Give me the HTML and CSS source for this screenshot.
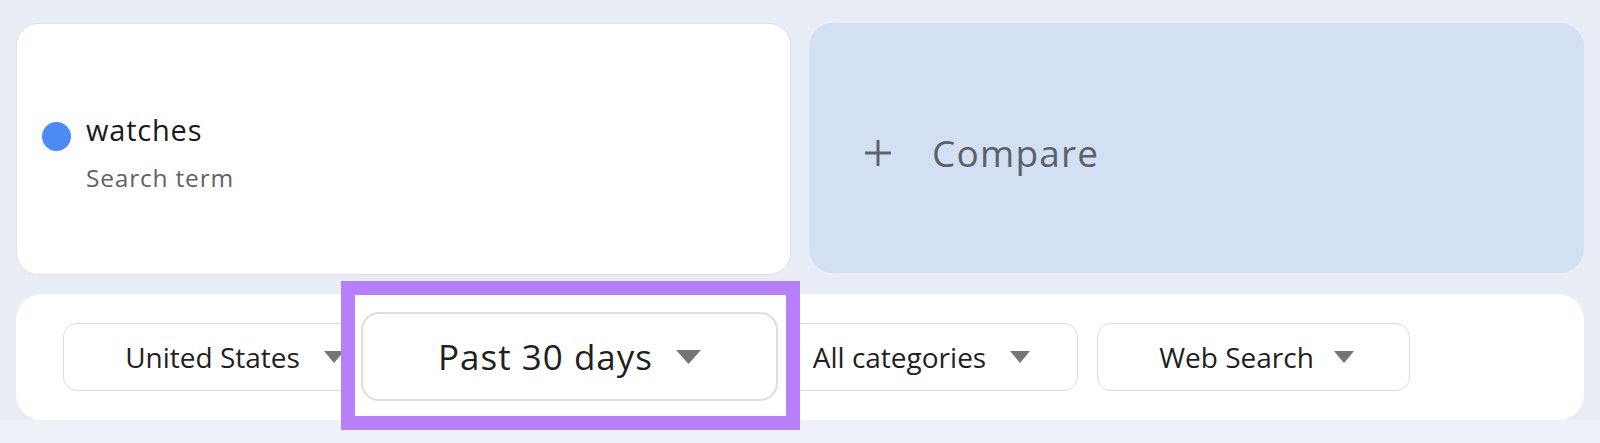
FILE: index.html
```html
<!DOCTYPE html>
<html lang="en">
<head>
    <meta charset="UTF-8">
    <title>Explore - watches</title>
    <link rel="stylesheet" href="styles.css">
</head>
<body>
    <div class="page">
        <div class="cards">
            <div class="card term-card">
                <div class="term-row">
                    <span class="dot"></span>
                    <span class="term">watches</span>
                </div>
                <div class="term-type">Search term</div>
            </div>
            <div class="card compare-card">
                <svg class="plus" width="28" height="28" viewBox="0 0 28 28">
                    <path d="M14 1v26M1 14h26" stroke="#5f6368" stroke-width="3" fill="none"/>
                </svg>
                <span class="compare">Compare</span>
            </div>
        </div>

        <div class="filters">
            <div class="pill pill-geo">
                <span>United States</span>
                <svg class="caret" width="20" height="12" viewBox="0 0 20 12"><polygon points="0,0 20,0 10,12"/></svg>
            </div>
            <div class="pill-slot">
                <!-- highlighted callout of the time range filter -->
                <div class="highlight">
                    <div class="pill pill-big">
                        <span>Past 30 days</span>
                        <svg class="caret" width="25" height="14" viewBox="0 0 25 14"><polygon points="0,0 25,0 12.5,14"/></svg>
                    </div>
                </div>
            </div>
            <div class="pill pill-cat">
                <span>All categories</span>
                <svg class="caret" width="20" height="12" viewBox="0 0 20 12"><polygon points="0,0 20,0 10,12"/></svg>
            </div>
            <div class="pill pill-prop">
                <span>Web Search</span>
                <svg class="caret" width="20" height="12" viewBox="0 0 20 12"><polygon points="0,0 20,0 10,12"/></svg>
            </div>
        </div>
    </div>
    <div class="strip"></div>
</body>
</html>
```

FILE: styles.css
```css
* { padding: 0; margin: 0; box-sizing: border-box; }
body {
    background: #e9edf5;
    font-family: "Open Sans", "Liberation Sans", sans-serif;
    color: #1f1f1f;
    width: 1600px;
    height: 443px;
    overflow: hidden;
}
.page {
    padding: 23px 16px 0 16px;
}
.cards {
    display: grid;
    grid-template-columns: 1fr 1fr;
    gap: 18px;
    align-items: start;
}
.card {
    border-radius: 22px;
}
.term-card {
    background: #fff;
    border: 1px solid #dfe1e5;
    height: 252px;
    padding: 88px 0 0 25px;
}
.term-row {
    display: flex;
    align-items: flex-start;
    gap: 15px;
}
.dot {
    width: 29px;
    height: 29px;
    margin-top: 10px;
    border-radius: 50%;
    background: #4b8bf2;
}
.term {
    font-size: 29px;
    line-height: 36px;
    letter-spacing: 0.8px;
    color: #1a1a1a;
}
.term-type {
    margin-top: 12px;
    padding-left: 44px;
    font-size: 24.5px;
    line-height: 30px;
    letter-spacing: 0.8px;
    color: #5f6368;
}
.compare-card {
    background: #d3e0f4;
    height: 250px;
    border-radius: 24px;
    padding: 10px 0 0 55px;
    display: flex;
    align-items: center;
    gap: 40px;
}
.compare {
    font-size: 37px;
    line-height: 44px;
    letter-spacing: 1.2px;
    color: #5d6167;
}
.filters {
    margin-top: 19px;
    background: #fff;
    border-radius: 26px;
    padding: 29px 0 29px 47px;
    display: flex;
    gap: 19px;
}
.pill {
    height: 68px;
    border: 1px solid #dadce0;
    border-radius: 14px;
    display: flex;
    align-items: center;
    justify-content: center;
    gap: 24px;
    font-size: 28px;
    line-height: 36px;
    color: #1f1f1f;
}
.pill-geo { width: 343px; }
.pill-cat { width: 313px; }
.pill-prop { width: 313px; gap: 20px; padding-left: 6px; }
.pill-slot {
    position: relative;
    width: 321px;
    height: 68px;
}
.caret {
    fill: #757575;
}
.highlight {
    position: absolute;
    left: -84px;
    top: -42px;
    width: 459px;
    height: 149px;
    border: 14px solid #b77ffa;
    background: #fff;
    padding: 17px 0 0 6px;
    z-index: 2;
}
.pill-big {
    width: 417px;
    height: 89px;
    border: 2px solid #dedede;
    border-radius: 18px;
    gap: 23px;
    font-size: 35px;
    line-height: 44px;
    letter-spacing: 1px;
}
.strip {
    height: 23px;
    background: #eef2f8;
}
```
